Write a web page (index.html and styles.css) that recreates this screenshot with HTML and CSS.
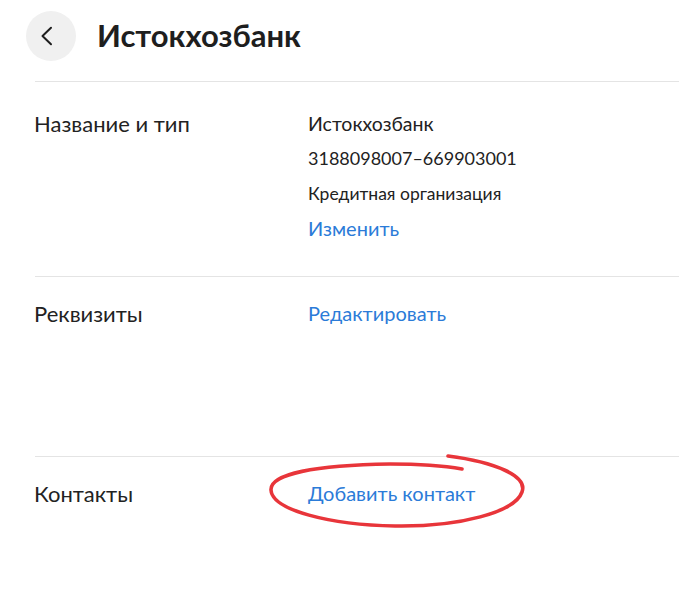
FILE: index.html
```html
<!DOCTYPE html>
<html lang="ru">

<head>
  <meta charset="UTF-8">
  <meta name="viewport" content="width=device-width, initial-scale=1.0">
  <title>Истокхозбанк</title>
  <link rel="stylesheet" href="styles.css">
</head>

<body>
  <header class="page-header">
    <button class="back-btn" aria-label="Назад">
      <svg width="20" height="20" viewBox="0 0 20 20">
        <path d="M12 1.8 L3.5 10 L12 18.2" fill="none" stroke="#1e1e1e" stroke-width="2" stroke-linecap="round" stroke-linejoin="round" />
      </svg>
    </button>
    <h1>Истокхозбанк</h1>
  </header>

  <main class="details">
    <section class="row first">
      <div class="label">Название и тип</div>
      <div class="value">
        <div class="line">Истокхозбанк</div>
        <div class="line digits">3188098007–669903001</div>
        <div class="line small">Кредитная организация</div>
        <a class="link" href="#">Изменить</a>
      </div>
    </section>

    <section class="row tall">
      <div class="label">Реквизиты</div>
      <div class="value">
        <a class="link" href="#">Редактировать</a>
      </div>
    </section>

    <section class="row">
      <div class="label">Контакты</div>
      <div class="value">
        <a class="link" href="#">Добавить контакт</a>
      </div>
    </section>
  </main>

  <!-- пометка от руки поверх страницы -->
  <svg class="scribble" width="679" height="603" viewBox="0 0 679 603">
    <path d="M448 456 C495 462 528 476 522 492 C515 512 460 527 395 526 C330 525 272 510 271 490 C270 474 315 465 390 464 C420 464 445 466 462 469"
      fill="none" stroke="#e8353a" stroke-width="3.6" stroke-linecap="round" />
  </svg>
</body>

</html>
```

FILE: styles.css
```css
* {
  margin: 0;
  padding: 0;
  box-sizing: border-box;
}

body {
  font-family: 'Lato', 'Liberation Sans', sans-serif;
  background: #fff;
  color: #222;
  position: relative;
  min-height: 100vh;
}

.page-header {
  display: flex;
  align-items: flex-start;
  gap: 21px;
  padding: 11px 0 0 26px;
  height: 81px;
}

.back-btn {
  width: 50px;
  height: 50px;
  flex-shrink: 0;
  border: none;
  border-radius: 50%;
  background: #f0f0f0;
  display: flex;
  align-items: center;
  justify-content: center;
  padding-right: 4px;
  cursor: pointer;
}

.page-header h1 {
  font-size: 31px;
  font-weight: 700;
  line-height: 50px;
  color: #1e1e1e;
  margin-top: -1px;
}

.details {
  padding-left: 35px;
}

.row {
  display: grid;
  grid-template-columns: 273px 1fr;
  border-top: 1px solid #e4e4e4;
  padding: 19px 0 30px;
}

.row.first {
  padding-top: 24px;
}

.row.tall {
  min-height: 180px;
}

.label {
  font-size: 22px;
  line-height: 35px;
  margin-left: -1px;
}

.value {
  display: flex;
  flex-direction: column;
}

.line {
  font-size: 19.5px;
  line-height: 35px;
}

.line.digits {
  font-size: 18px;
}

.line.small {
  font-size: 17.5px;
}

.link {
  font-size: 20px;
  line-height: 35px;
  color: #2b7bd8;
  text-decoration: none;
}

.scribble {
  position: absolute;
  left: 0;
  top: 0;
  pointer-events: none;
}
```
